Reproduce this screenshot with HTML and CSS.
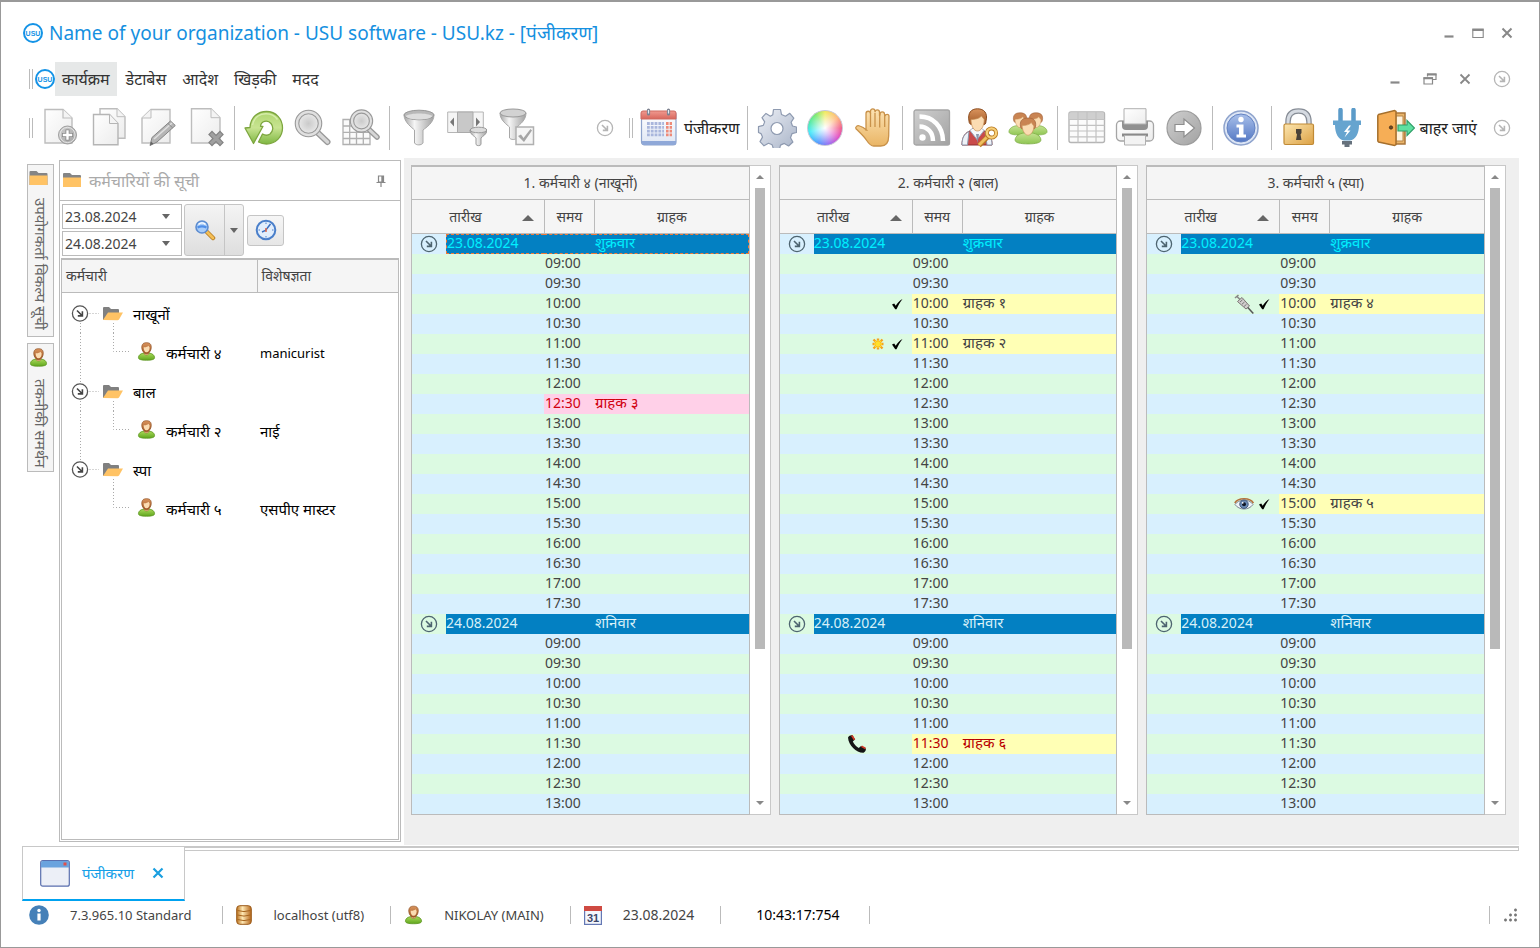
FILE: index.html
```html
<!DOCTYPE html>
<html lang="hi">
<head>
<meta charset="utf-8">
<title>USU software - पंजीकरण</title>
<link rel="stylesheet" href="styles.css">
</head>
<body>
<svg class="defs" aria-hidden="true">
  <defs>
    <linearGradient id="paper" x1="0" y1="0" x2="1" y2="1"><stop offset="0" stop-color="#fff"/><stop offset="1" stop-color="#ececec"/></linearGradient>
    <linearGradient id="steel" x1="0" y1="0" x2="1" y2="0"><stop offset="0" stop-color="#a5a5a5"/><stop offset=".35" stop-color="#f6f6f6"/><stop offset="1" stop-color="#a0a0a0"/></linearGradient>
    <linearGradient id="grey" x1="0" y1="0" x2="1" y2="1"><stop offset="0" stop-color="#cfcfcf"/><stop offset="1" stop-color="#a2a2a2"/></linearGradient>
    <radialGradient id="glass"><stop offset="0" stop-color="#cacaca"/><stop offset="1" stop-color="#ececec"/></radialGradient>
    <linearGradient id="green" x1="0" y1="0" x2="0" y2="1"><stop offset="0" stop-color="#aed66f"/><stop offset=".5" stop-color="#c8e491"/><stop offset="1" stop-color="#7fb743"/></linearGradient>
    <linearGradient id="gear" x1="0" y1="0" x2="1" y2="1"><stop offset="0" stop-color="#edf0f6"/><stop offset="1" stop-color="#a9b4c8"/></linearGradient>
    <linearGradient id="skin" x1="0" y1="0" x2="0" y2="1"><stop offset="0" stop-color="#fce3b4"/><stop offset="1" stop-color="#eab565"/></linearGradient>
    <linearGradient id="hair" x1="0" y1="0" x2="0" y2="1"><stop offset="0" stop-color="#d9935c"/><stop offset="1" stop-color="#a25b28"/></linearGradient>
    <linearGradient id="shirt" x1="0" y1="0" x2="0" y2="1"><stop offset="0" stop-color="#a9d95a"/><stop offset="1" stop-color="#5fa61c"/></linearGradient>
    <linearGradient id="softshirt" x1="0" y1="0" x2="0" y2="1"><stop offset="0" stop-color="#c4e290"/><stop offset="1" stop-color="#8fc653"/></linearGradient>
    <linearGradient id="blue" x1="0" y1="0" x2="0" y2="1"><stop offset="0" stop-color="#a9c0ea"/><stop offset="1" stop-color="#5478c4"/></linearGradient>
    <linearGradient id="gold" x1="0" y1="0" x2="1" y2="1"><stop offset="0" stop-color="#fce6b0"/><stop offset="1" stop-color="#dca144"/></linearGradient>
    <linearGradient id="barrel" x1="0" y1="0" x2="1" y2="0"><stop offset="0" stop-color="#b9701d"/><stop offset=".4" stop-color="#ffe9b5"/><stop offset="1" stop-color="#b5661b"/></linearGradient>
    <linearGradient id="redbar" x1="0" y1="0" x2="0" y2="1"><stop offset="0" stop-color="#f09a90"/><stop offset="1" stop-color="#d8665c"/></linearGradient>
    <linearGradient id="calpage" x1="0" y1="0" x2="0" y2="1"><stop offset="0" stop-color="#fff"/><stop offset="1" stop-color="#dfe6f4"/></linearGradient>
  </defs>
  <symbol id="i-more" viewBox="0 0 18 18">
    <circle cx="9" cy="9" r="7.6" fill="none" stroke="currentColor" stroke-width="1.3"/>
    <path d="M6 6l5 5M11.4 6.8v4.6H6.800" fill="none" stroke="currentColor" stroke-width="1.6"/>
  </symbol>
  <symbol id="i-person" viewBox="0 0 20 20">
    <path d="M1.500 16.500c0-3 3-4.500 5.500-4.800h6c2.500.3 5.500 1.800 5.500 4.800 0 2-3.500 2.700-8.500 2.700s-8.500-.7-8.500-2.700z" fill="url(#shirt)" stroke="#5c9422" stroke-width=".8"/>
    <path d="M7.500 10.500h5v2c-.8 1.600-4.200 1.600-5 0z" fill="#f0c08c" stroke="#8c5a2c" stroke-width=".5"/>
    <path d="M5 6c0-4 2-5.300 5-5.300S15.300 2 15 6c-.2 3-2 6.300-5 6.300S5.200 9 5 6z" fill="url(#hair)" stroke="#8a4a1c" stroke-width=".7"/>
    <path d="M7 5.500c2 .3 4-.3 5-1.500l1.300 1.800c0 3-1.300 5-3.300 5S7 8.500 7 5.500z" fill="#fbdcb2"/>
  </symbol>
  <symbol id="i-member" viewBox="0 0 20 20">
    <path d="M.8 16.500c0-3 3.500-4.800 6-5h6.400c2.500.2 6 2 6 5 0 2-4 2.700-9.200 2.700S.8 18.500.8 16.500z" fill="url(#softshirt)" stroke="#7fae48" stroke-width=".6"/>
    <path d="M4.500 5.500C4.500 2 6.500.7 10 .7s5.500 1.300 5.500 4.800c0 1.500-.5 2.500-1 3h-9c-.5-.5-1-1.500-1-3z" fill="#c98452" stroke="#a0623a" stroke-width=".5"/>
    <path d="M5.800 6c2.500.2 5.500-.5 6.500-2l1.900 2.500c0 3.500-2 6.500-4.200 6.500S5.800 9.500 5.800 6z" fill="#fbdcb2" stroke="#c58d55" stroke-width=".4"/>
  </symbol>
  <symbol id="i-folder" viewBox="0 0 18 15">
    <path d="M0 1q0-1 1-1h6l2 2h8q1 0 1 1v11H0z" fill="#858585"/>
    <path d="M0 4.500h18v9.500H0z" fill="#ffc365"/>
  </symbol>
  <symbol id="i-check" viewBox="0 0 12 12">
    <path d="M1 6.500l2.200-1 1.500 2.300C6.500 5 8.500 2.500 11.500 1 9 4 7 8 5.500 11.200H4.200z" fill="#000"/>
  </symbol>
  <symbol id="i-star" viewBox="0 0 18 14">
    <path d="M9 1.500v11M3.500 7h11M4.500 2.500l9 9M13.500 2.500l-9 9" stroke="#f5a21c" stroke-width="2.400"/>
    <path d="M9 3v8M5 7h8M6 4l6 6M12 4l-6 6" stroke="#ffe02a" stroke-width="1.300"/>
  </symbol>
  <symbol id="i-syringe" viewBox="0 0 20 20">
    <path d="M1 4l3.500-3M3 2.500l3 3" stroke="#888" stroke-width="1.600"/>
    <path d="M3.500 7.500L8 3.500l7.500 8.500-3.500 3z" fill="#d0cccc" stroke="#7c7474"/>
    <path d="M6 8l2.500-2.200M8 10.200l2.500-2.200M10 12.500l2.500-2.200" stroke="#777"/>
    <path d="M13.800 13.500l5.500 6" stroke="#555" stroke-width="1.500"/>
  </symbol>
  <symbol id="i-eye" viewBox="0 0 20 14">
    <path d="M1 7.500C4 2.500 15 1 19 7.500c-4 6-14 6-18 0z" fill="#eef4fa" stroke="#7e8794"/>
    <path d="M.8 6C4 .5 16 .2 19.400 6" fill="none" stroke="#b5703c" stroke-width="1.500"/>
    <circle cx="10" cy="7.200" r="4.200" fill="#6c8db8" stroke="#44597a"/>
    <circle cx="10" cy="7.200" r="2" fill="#101828"/><circle cx="8.700" cy="5.800" r=".9" fill="#fff"/>
  </symbol>
  <symbol id="i-phone" viewBox="0 0 20 20">
    <path d="M1 3.500C2 1.500 4 .8 5.500 1.300L8 5.500 5.800 7.500c1.400 3 3.300 5 6 6.400l2.200-2 4.800 2.600c.5 1.700-.8 3.400-2.300 4.200C9.500 19 1.500 11.500 1 3.500z" fill="#151515"/>
    <path d="M4.800 1.500l2.700 4.300M14.500 12.300l4 2.200" stroke="#d23a28" stroke-width="1.800"/>
  </symbol>
</svg>

<div class="window">
  <header class="titlebar">
    <svg class="logo" viewBox="0 0 20 20"><circle cx="10" cy="10" r="9" fill="#fff" stroke="#1493e6" stroke-width="2"/><text x="10" y="12.500" text-anchor="middle" class="logo-text">USU</text></svg>
    <h1>Name of your organization - USU software - USU.kz - [पंजीकरण]</h1>
    <div class="controls title-controls">
      <button type="button" aria-label="Minimize"><svg width="12" height="12"><path d="M1.500 9.500h9" stroke="#888" stroke-width="2.200"/></svg></button>
      <button type="button" aria-label="Maximize"><svg width="12" height="12"><path d="M.8 2h10.400v8.500H.8z" fill="none" stroke="#888" stroke-width="1.100"/><path d="M.5 3h11" stroke="#888" stroke-width="2"/></svg></button>
      <button type="button" aria-label="Close"><svg width="12" height="12"><path d="M1.500 1.500l9 9M10.500 1.500l-9 9" stroke="#888" stroke-width="2"/></svg></button>
    </div>
  </header>

  <nav class="menubar">
    <span class="grip"></span>
    <svg class="logo" viewBox="0 0 20 20"><circle cx="10" cy="10" r="9" fill="#fff" stroke="#1493e6" stroke-width="2"/><text x="10" y="12.500" text-anchor="middle" class="logo-text">USU</text></svg>
    <div class="menus">
      <button type="button" class="menu active">कार्यक्रम</button>
      <button type="button" class="menu">डेटाबेस</button>
      <button type="button" class="menu">आदेश</button>
      <button type="button" class="menu">खिड़की</button>
      <button type="button" class="menu">मदद</button>
    </div>
    <div class="controls child-controls">
      <button type="button" aria-label="Minimize child"><svg width="12" height="12"><path d="M1.500 9.500h9" stroke="#888" stroke-width="2.200"/></svg></button>
      <button type="button" aria-label="Restore child"><svg width="14" height="12"><path d="M4.500 3.500V1h8.500v5.500h-3M1 4.800h8.500v6.200H1z" fill="none" stroke="#888" stroke-width="1.200"/><path d="M4 1.500h9.500M.5 5.300h9.500" stroke="#888" stroke-width="2"/></svg></button>
      <button type="button" aria-label="Close child"><svg width="12" height="12"><path d="M1.500 1.500l9 9M10.500 1.500l-9 9" stroke="#888" stroke-width="1.800"/></svg></button>
      <button type="button" class="more" aria-label="More"><svg width="18" height="18"><use href="#i-more"/></svg></button>
    </div>
  </nav>

  <div class="toolbars">
    <div class="toolbar main-tools" role="toolbar">
      <span class="grip"></span>
      <button type="button" class="tool" aria-label="New"><svg viewBox="0 0 40 40"><path d="M4 1.500h18l9 8.500v25H4z" fill="url(#paper)" stroke="#bdbdbd" stroke-width="1.400"/><path d="M22 1.500v8.500h9" fill="#f4f4f4" stroke="#bdbdbd" stroke-width="1.200"/><circle cx="26.500" cy="27" r="9" fill="url(#grey)" stroke="#a0a0a0"/><circle cx="26.500" cy="27" r="7.600" fill="none" stroke="#e6e6e6"/><path d="M26.500 21.500v11M21 27h11" stroke="#888" stroke-width="4"/><path d="M26.500 22.300v9.400M21.800 27h9.400" stroke="#fff" stroke-width="2.400"/></svg></button>
      <button type="button" class="tool" aria-label="Copy"><svg viewBox="0 0 40 40"><path d="M11 .7h17l8 8v21.500H11z" fill="url(#paper)" stroke="#bdbdbd" stroke-width="1.400"/><path d="M28 .7v8h8" fill="#f4f4f4" stroke="#bdbdbd"/><path d="M4.500 6.500h16l8.500 9v21.300H4.500z" fill="url(#paper)" stroke="#b5b5b5" stroke-width="1.400"/><path d="M20.500 6.500v9H29" fill="#f4f4f4" stroke="#b5b5b5"/></svg></button>
      <button type="button" class="tool" aria-label="Edit"><svg viewBox="0 0 40 40"><path d="M14 1.500h19v33.500H5V10z" fill="url(#paper)" stroke="#bdbdbd" stroke-width="1.400"/><path d="M14 1.500V10H5" fill="#f4f4f4" stroke="#bdbdbd"/><path d="M13 37.500l2-8L33.500 13l4.800 4.500L20 34z" fill="#b5b5b5" stroke="#858585"/><path d="M17 31l18-16" stroke="#dedede" stroke-width="1.600"/><path d="M13 37.500l1-4 2.500 2.300z" fill="#666"/><path d="M31 15.500l4.800 4.500" stroke="#8a8a8a"/></svg></button>
      <button type="button" class="tool" aria-label="Delete"><svg viewBox="0 0 40 40"><path d="M6.500 .7h19.500l9 9v25.300H6.500z" fill="url(#paper)" stroke="#bdbdbd" stroke-width="1.400"/><path d="M26 .7v9h9" fill="#f4f4f4" stroke="#bdbdbd"/><path d="M27 26.500l8 8M35 26.500l-8 8" stroke="#838383" stroke-width="5.500" stroke-linecap="square"/><path d="M27 26.500l8 8M35 26.500l-8 8" stroke="#a0a0a0" stroke-width="3.200" stroke-linecap="square"/></svg></button>
      <span class="sep"></span>
      <button type="button" class="tool" aria-label="Refresh"><svg viewBox="0 0 40 40"><path d="M6 19.500C6.500 9 14 3.500 22.500 3.500c9.500 0 16 7.500 16 16.500s-7 16-16 16c-3 0-5.500-.6-8-2l4-8c3 1.800 5.500 1.500 7.500 0 3.500-2.800 3.500-7.500 1-10.500-3.500-4-10-2.500-10.500 2.800h2.500L9.500 35.500 1 20z" fill="url(#green)" stroke="#7da63f" stroke-width="1.300" stroke-linejoin="round"/><path d="M8.500 17C10 9.500 15.500 5.800 22 5.800c5 0 9 2.200 11.500 5.700" fill="none" stroke="#d6edab" stroke-width="1.500"/></svg></button>
      <button type="button" class="tool" aria-label="Search"><svg viewBox="0 0 40 40"><path d="M25 24l10.500 10" stroke="#999" stroke-width="6" stroke-linecap="round"/><path d="M25 24l10.500 10" stroke="#d6d6d6" stroke-width="3.400" stroke-linecap="round"/><circle cx="16.500" cy="15.500" r="11.500" fill="url(#glass)" stroke="#999" stroke-width="4.600"/><circle cx="16.500" cy="15.500" r="11.500" fill="none" stroke="#e0e0e0" stroke-width="2.400"/></svg></button>
      <button type="button" class="tool" aria-label="Search in table"><svg viewBox="0 0 40 40"><path d="M3 11.500h27v25H3zM3 18h27M3 24.300h27M3 30.500h27M9.700 11.500v25M16.500 11.500v25M23.300 11.500v25" fill="#fafafa" stroke="#b0b0b0" stroke-width="1.300"/><path d="M29 21.500l8 7.500" stroke="#999" stroke-width="5.500" stroke-linecap="round"/><path d="M29 21.500l8 7.500" stroke="#d6d6d6" stroke-width="2.900" stroke-linecap="round"/><circle cx="21.500" cy="13" r="9.500" fill="url(#glass)" stroke="#999" stroke-width="4.400"/><circle cx="21.500" cy="13" r="9.500" fill="none" stroke="#e0e0e0" stroke-width="2.200"/></svg></button>
      <span class="sep"></span>
      <button type="button" class="tool" aria-label="Filter"><svg viewBox="0 0 40 40"><path d="M5 6.500c0 8 8 13 10.500 15.500v13c1.500 2.500 7 2.500 8.500 0V22C27 19.500 35 15 35 6.500z" fill="url(#steel)" stroke="#a8a8a8"/><ellipse cx="20" cy="7" rx="15" ry="4.800" fill="#b8b8b8" stroke="#999"/><path d="M6.500 8c5-3.500 22-3.500 27 0-3 4.800-24 4.800-27 0z" fill="#dedede"/></svg></button>
      <button type="button" class="tool" aria-label="Filter columns"><svg viewBox="0 0 40 40"><path d="M.7 4h35.600v20.500H.7z" fill="#f5f5f5" stroke="#b5b5b5"/><path d="M10.500 4h15.500v20.500H10.500z" fill="#c8c8c8" stroke="#aaa"/><path d="M7 9.500v9l-4-4.500zM29 9.500v9l4-4.500z" fill="#777"/><path d="M23 22c0 4.500 4.500 6 6 8v6.500c1 1.500 4 1.500 5 0V30c1.500-2 6-3.500 6-8z" fill="url(#steel)" stroke="#999"/><ellipse cx="31.500" cy="22" rx="8.300" ry="2.800" fill="#dcdcdc" stroke="#999"/></svg></button>
      <button type="button" class="tool" aria-label="Apply filter"><svg viewBox="0 0 40 40"><path d="M5 5c0 7.500 7 11.500 9.500 14v11c1.500 2 6 2 7.500 0V19C24.500 16.500 31 12.500 31 5z" fill="url(#steel)" stroke="#a8a8a8"/><ellipse cx="18" cy="5" rx="13" ry="4" fill="#d2d2d2" stroke="#999"/><path d="M21 19h17.500v17.500H21z" fill="#f5f5f5" stroke="#b0b0b0" stroke-width="1.500"/><path d="M23 28l3-1.500 2.500 3.500 7-9 1.500 1.500-8 11.500z" fill="#a5a5a5"/></svg></button>
      <button type="button" class="more push" aria-label="More"><svg width="18" height="18"><use href="#i-more"/></svg></button>
    </div>
    <div class="toolbar extra-tools" role="toolbar">
      <span class="grip"></span>
      <button type="button" class="tool wide"><svg viewBox="0 0 40 40"><rect x="2.500" y="3.500" width="34.500" height="33.500" rx="3" fill="url(#calpage)" stroke="#8ea3cc" stroke-width="1.200"/><path d="M3 33h34v2q0 2-2 2H5q-2 0-2-2z" fill="#8fa8d8"/><path d="M2 11V5q0-2 2-2h31q2 0 2 2v6z" fill="url(#redbar)" stroke="#cf6a60"/><path d="M8 15.500h17M8 19.300h17M8 23.100h17M8 26.900h17" stroke="#a9b6dc" stroke-width="2.800" stroke-dasharray="2.800 1"/><path d="M27 15.500h6M27 19.300h6M27 23.100h6M27 26.900h6" stroke="#ee8a78" stroke-width="2.800" stroke-dasharray="2.600 1"/><path d="M9.500 2v4M29.500 2v4" stroke="#7c8290" stroke-width="3.200" stroke-linecap="round"/><path d="M9.500 2v3.500M29.500 2v3.500" stroke="#e8ecf2" stroke-width="1.200"/></svg><span>पंजीकरण</span></button>
      <span class="sep"></span>
      <button type="button" class="tool" aria-label="Settings"><svg viewBox="0 0 40 40"><path d="M16.500 1.500h7l1 5 4 1.700 4.300-2.900 4 4.800-2.700 4.200 1.400 3.700 4 1v5.500l-4.500 1.200-1.500 4 2.400 4.300-4.300 4-4.300-2.600-3.800 1.700-1 3.900h-6l-1.400-4.200-3.600-1.500-4.500 2.500-4-4.200 2.500-4.500-1.500-3.500L1.500 24.500v-5.800l4.800-1.300 1.400-3.500-2.700-4.300 4-4.200 4.400 2.800 2.400-1.500z" fill="url(#gear)" stroke="#8e9ab0" stroke-width="1.200" stroke-linejoin="round"/><circle cx="20" cy="20.500" r="6" fill="#fff" stroke="#8e9ab0" stroke-width="1.200"/></svg></button>
      <button type="button" class="tool" aria-label="Colours"><span class="wheel"></span></button>
      <button type="button" class="tool" aria-label="Hand"><svg viewBox="0 0 40 40"><path d="M13 22V5.500c0-3 4.500-3 4.500 0V3.200c0-3 4.500-3 4.500 0v1c0-3 4.500-3 4.500 0v3.500l.5-1.500c0-3 4.500-3 4.500 0l.5 2c.5-2.500 4-2.500 4 0l-.3 19.500c0 7-3 10.300-8 10.300h-7c-3 0-5-2.500-7-5.500-3-4.500-7-8-10.500-11.500-1.500-2 1-4 3.500-3 2.500.8 4.500 2 6.800 4z" fill="url(#skin)" stroke="#c9924a" stroke-width="1.300"/><path d="M17.500 5v14M22 5v14M26.700 6v13.500M31.700 7v12" stroke="#c9924a" stroke-width="1.300"/></svg></button>
      <span class="sep"></span>
      <button type="button" class="tool" aria-label="Feed"><svg viewBox="0 0 40 40"><rect x="2" y="2" width="35.500" height="35" rx="2" fill="url(#grey)" stroke="#a5a5a5" stroke-width="1.300"/><circle cx="10.500" cy="29.500" r="3.200" fill="#fff"/><path d="M7.500 18.500c8 0 13.500 6 13.500 14.500M7.500 8.500C21 8.500 31 18.500 31 33" fill="none" stroke="#fff" stroke-width="4.500"/></svg></button>
      <button type="button" class="tool" aria-label="User rights"><svg viewBox="0 0 40 40"><path d="M2 37c0-8 3-12.500 9-14.500h12c6 2 9 6 9 14.500z" fill="#c94a4a" stroke="#8c2f30"/><path d="M2 37c0-7 2-11 7-13.500L7.500 37zM32 37c0-7-2-11-7-13.500L27 37z" fill="#eef2f8" stroke="#8b97ab"/><path d="M10 22.500l7 9 7-9-2-2H12z" fill="#f6f8fb" stroke="#9aa6ba"/><path d="M16 26h3l-1.500 9z" fill="#8b97ab"/><path d="M9 13C7.500 5 11 .8 17.500.8S28 5 26 13c0 3-1.500 4-2.500 3.500h-12c-1 0-2.500-1-2.500-3.500z" fill="url(#hair)" stroke="#8a4a1c"/><path d="M11 11.500c4 0 8.500-1 10.500-3.500l2.700 3.500c0 7-3.200 11.500-6.700 11.500S11 18.500 11 11.500z" fill="#fbdcb2" stroke="#c58d55" stroke-width=".7"/><path d="M19 37.500l9.500-9.500" stroke="#b87a22" stroke-width="5"/><path d="M19 37l9.500-9.500" stroke="#f0c060" stroke-width="3"/><circle cx="31.500" cy="25" r="4.600" fill="none" stroke="#b87a22" stroke-width="4"/><circle cx="31.500" cy="25" r="4.600" fill="none" stroke="#f7cf78" stroke-width="2.400"/></svg></button>
      <button type="button" class="tool" aria-label="Users"><svg viewBox="0 0 40 40"><svg x="0" y="4" width="24" height="24"><use href="#i-member"/></svg><svg x="16" y="4" width="24" height="24"><use href="#i-member"/></svg><svg x="6" y="9" width="28" height="28"><use href="#i-member"/></svg></svg></button>
      <span class="sep"></span>
      <button type="button" class="tool" aria-label="Table"><svg viewBox="0 0 40 40"><rect x="2" y="4" width="35.500" height="30.500" rx="2" fill="#fbfbfb" stroke="#b5b5b5" stroke-width="1.400"/><path d="M2.500 4.500h34.500v7H2.500z" fill="#cfcfcf"/><path d="M2 11.500h35.500M2 17.300h35.500M2 23h35.500M2 28.800h35.500M11 4v30.500M20 4v30.500M29 4v30.500" stroke="#c2c2c2" stroke-width="1.200"/></svg></button>
      <button type="button" class="tool" aria-label="Print"><svg viewBox="0 0 40 40"><rect x="1.500" y="13" width="37" height="20" rx="4" fill="url(#paper)" stroke="#a5a5a5" stroke-width="1.300"/><path d="M7 13h26v5q0 4-4 4H11q-4 0-4-4z" fill="#909090"/><path d="M9 .7h22V16H9z" fill="url(#paper)" stroke="#b0b0b0"/><path d="M7 25.500h26v3H7z" fill="#8a8a8a"/><path d="M9.500 27.500h21V37h-21z" fill="#f3f3f3" stroke="#b0b0b0"/></svg></button>
      <button type="button" class="tool" aria-label="Next"><svg viewBox="0 0 40 40"><circle cx="21" cy="20" r="17" fill="url(#grey)" stroke="#9c9c9c" stroke-width="1.200"/><path d="M12 16.500h9v-5.500l10.500 9-10.500 9v-5.500h-9z" fill="#fff" stroke="#8e8e8e" stroke-width="1.200"/></svg></button>
      <span class="sep"></span>
      <button type="button" class="tool" aria-label="Info"><svg viewBox="0 0 40 40"><circle cx="19" cy="20" r="17" fill="#dce5f5" stroke="#8da2cc" stroke-width="1.500"/><circle cx="19" cy="20" r="14" fill="url(#blue)" stroke="#6483c2"/><circle cx="19" cy="11.500" r="2.700" fill="#fff"/><path d="M14.500 16.500h7v10h2.500v3h-9.500v-3H17v-7h-2.500z" fill="#fff"/></svg></button>
      <span class="sep"></span>
      <button type="button" class="tool" aria-label="Lock"><svg viewBox="0 0 40 40"><path d="M7 19v-5C7 5.500 11.500 3 17.500 3S28 5.500 28 14v5" fill="none" stroke="#878d96" stroke-width="5.500"/><path d="M7 19v-5C7 5.500 11.500 3 17.500 3S28 5.500 28 14v5" fill="none" stroke="#d5dae1" stroke-width="3"/><rect x="3" y="16" width="29.500" height="20.500" rx="1.500" fill="url(#gold)" stroke="#c08a35" stroke-width="1.200"/><path d="M15 21h5.500v4l-1 1.500 1 5.500H15l1-5.500-1-1.500z" fill="#4a4238"/></svg></button>
      <button type="button" class="tool" aria-label="Connection"><svg viewBox="0 0 40 40"><path d="M11.500 2v12M24.500 2v12" stroke="#5b9bc9" stroke-width="4.500" stroke-linecap="round"/><path d="M4 12.500h28v4.500h-2c0 9-3.500 14.500-9 15.500h-6c-5.500-1-9-6.500-9-15.500H4z" fill="#66a4cf"/><path d="M13 33h10v3.500h-2.500v2.500h-5v-2.500H13z" fill="#66717c"/><path d="M20 17.500l-5 6.500h3l-2.500 5.500 6-7h-3l3.500-5z" fill="#fff"/></svg></button>
      <button type="button" class="tool wide"><svg viewBox="0 0 40 40"><path d="M17 5h13v31H17z" fill="#e9b56b" stroke="#a9753b" stroke-width="1.500"/><path d="M21 8h7v25h-7z" fill="#fff3dc" stroke="#b98649"/><path d="M3.500 6.500L19.500 2.500l1.500 1v33l-1.500 1-16-3.500q-.7-.5-.7-1.500V8q0-1 .7-1.500z" fill="#f6ae56" stroke="#a56f2c" stroke-width="1.500"/><circle cx="16" cy="19.500" r="1.600" fill="#6b4a28" stroke="#4c3218"/><path d="M23 17h9v-4.500l7.500 7.500-7.500 7.500V23h-9z" fill="#5fe0a0" stroke="#2f9e68" stroke-width="1.200"/></svg><span>बाहर जाएं</span></button>
      <button type="button" class="more push" aria-label="More"><svg width="18" height="18"><use href="#i-more"/></svg></button>
    </div>
  </div>

  <main class="workspace">
    <aside class="sidetabs">
      <button type="button" class="sidetab"><svg width="19" height="15"><use href="#i-folder"/></svg><span>उपयोगकर्ता विकल्प सूची</span></button>
      <button type="button" class="sidetab"><svg width="19" height="19"><use href="#i-person"/></svg><span>तकनीकी समर्थन</span></button>
    </aside>

    <section class="panel">
      <header class="panel-head">
        <svg width="18" height="15"><use href="#i-folder"/></svg>
        <h2>कर्मचारियों की सूची</h2>
        <button type="button" class="pin" aria-label="Pin"><svg width="10" height="12"><path d="M2.500 1h5v6h-5zM.5 7.500h9M5 7.500V12" fill="none" stroke="#888" stroke-width="1.200"/><path d="M6.300 1v6" stroke="#888" stroke-width="2"/></svg></button>
      </header>
      <div class="filters">
        <div class="dates">
          <div class="datebox"><input type="text" value="23.08.2024" aria-label="Date from"><button type="button" aria-label="Open"><span class="arrow-down"></span></button></div>
          <div class="datebox"><input type="text" value="24.08.2024" aria-label="Date to"><button type="button" aria-label="Open"><span class="arrow-down"></span></button></div>
        </div>
        <div class="split">
          <button type="button" class="split-main" aria-label="Find"><svg width="22" height="22"><path d="M13 13l6 6" stroke="#b8802a" stroke-width="4.500" stroke-linecap="round"/><path d="M13 13l6 6" stroke="#f5bf55" stroke-width="2.600" stroke-linecap="round"/><circle cx="8" cy="8" r="6" fill="#a9cdf8" stroke="#5c8cd0" stroke-width="1.600"/><path d="M3.500 8.500c3-1.500 6-1.500 9 0" stroke="#4f8ee8" stroke-width="2" fill="none"/><path d="M4.500 5.500c2-2 5-2 7 0" stroke="#fff" stroke-width="1.500" fill="none"/></svg></button>
          <button type="button" class="split-arrow" aria-label="Options"><span class="arrow-down"></span></button>
        </div>
        <button type="button" class="clock" aria-label="Now"><svg width="22" height="22"><circle cx="11" cy="11" r="9.300" fill="#e2eefc" stroke="#4a7fca" stroke-width="2"/><path d="M11 3.500v1.500M11 17v1.500M3.500 11H5M17 11h1.500" stroke="#4a7fca"/><path d="M15.500 5l-5 6.500L7 13" fill="none" stroke="#3b6fc0" stroke-width="1.500"/><path d="M11 9v4" stroke="#e0684a" stroke-width="1.500"/></svg></button>
      </div>
      <div class="tree-box">
        <table class="tree">
          <colgroup><col class="col-staff"><col></colgroup>
          <thead><tr><th>कर्मचारी</th><th>विशेषज्ञता</th></tr></thead>
          <tbody id="tree-rows"></tbody>
        </table>
      </div>
    </section>

    <div class="boards" id="boards"></div>
  </main>

  <div class="doc-tabs">
    <div class="doc-tab">
      <svg width="30" height="27"><rect x=".7" y=".7" width="28.600" height="25.500" rx="2" fill="#eceff7" stroke="#5a6fae" stroke-width="1.200"/><path d="M1 7.500V3q0-2 2-2h24q2 0 2 2v4.500z" fill="#6aa3de"/><rect x="23.500" y="2.500" width="3" height="3" fill="#e2504a"/></svg>
      <a href="#boards">पंजीकरण</a>
      <button type="button" aria-label="Close tab"><svg width="12" height="12"><path d="M1.500 1.500l9 9M10.500 1.500l-9 9" stroke="#1a9fe0" stroke-width="2.200"/></svg></button>
    </div>
  </div>

  <footer class="status">
    <svg width="20" height="20"><circle cx="10" cy="10" r="9.800" fill="#4580b8"/><circle cx="10" cy="5.500" r="1.700" fill="#fff"/><path d="M8.400 8.500h3.200v7H8.400z" fill="#fff"/></svg>
    <span class="cell small c-version">7.3.965.10 Standard</span>
    <svg width="16" height="20"><rect x=".7" y=".7" width="14.600" height="18.600" rx="3" fill="url(#barrel)" stroke="#9a5a1a"/><path d="M1.500 5.500q6.500 2.200 13 0M1.500 10q6.500 2.200 13 0M1.500 14.500q6.500 2.200 13 0" fill="none" stroke="#a8661f"/></svg>
    <span class="cell small">localhost (utf8)</span>
    <svg width="19" height="20"><use href="#i-person"/></svg>
    <span class="cell small">NIKOLAY (MAIN)</span>
    <svg width="18" height="19"><rect x=".6" y=".6" width="16.800" height="17.800" fill="#f4f7fc" stroke="#6478b4" stroke-width="1.200"/><path d="M0 0h18v5H0z" fill="#cf4a42"/><text x="9" y="15.500" text-anchor="middle" class="cal-text">31</text></svg>
    <span class="cell">23.08.2024</span>
    <span class="cell c-clock">10:43:17:754</span>
    <span class="cell c-end"></span>
    <svg width="14" height="14" class="dots"><path d="M11 2h3M6 7h3M11 7h3M1 12h3M6 12h3M11 12h3" stroke="#777" stroke-width="1.500"/><path d="M12.500 .5v3M7.500 5.500v3M12.500 5.500v3M2.500 10.500v3M7.500 10.500v3M12.500 10.500v3" stroke="#777" stroke-width="1.500"/></svg>
  </footer>
</div>
<script src="schedule.js"></script>
</body>
</html>
```
FILE: styles.css
```css
*, *::before, *::after { box-sizing: border-box; }

body {
  margin: 0;
  background: #fff;
  color: #444;
  font: 14px/20px "Noto Sans", "Open Sans", sans-serif;
}

button, input {
  margin: 0;
  padding: 0;
  border: 0;
  background: none;
  color: inherit;
  font: inherit;
}

h1, h2 { margin: 0; font-weight: 400; }
svg { display: block; flex: none; }
.defs { position: absolute; width: 0; height: 0; }

.window {
  display: flex;
  flex-direction: column;
  min-height: 100vh;
  border: 1px solid #999;
  border-top-width: 2px;
  padding-bottom: 19px;
}

.logo { width: 20px; height: 20px; }
.logo-text { font: 700 7px "Liberation Sans", sans-serif; fill: #1493e6; }

/* title bar */
.titlebar {
  display: flex;
  align-items: center;
  gap: 6px;
  height: 60px;
  padding: 2px 26px 0 22px;
}
.titlebar h1 { font-size: 19px; line-height: 28px; color: #1590e0; white-space: nowrap; }
.controls { display: flex; align-items: center; margin-left: auto; }
.title-controls { gap: 17px; }

/* menu */
.menubar {
  display: flex;
  align-items: stretch;
  height: 36px;
  padding: 0 28px 2px 28px;
}
.menubar .logo { align-self: center; margin: 0 0 0 2px; }
.grip {
  flex: none;
  align-self: center;
  width: 4px;
  height: 20px;
  border: solid #bbb;
  border-width: 0 1px;
}
.menus { display: flex; gap: 2px; }
.menu { padding: 0 7px; color: #333; font-size: 16px; white-space: nowrap; }
.menu.active { background: #e6e8e8; }
.child-controls { gap: 22px; }
.more { color: #b5b5b5; }

/* toolbars */
.toolbars { display: flex; height: 60px; padding: 0 28px 0 28px; }
.toolbar { display: flex; align-items: center; }
.main-tools { flex: 0 1 585px; }
.extra-tools { flex: 1; padding-left: 15px; }
.toolbar .grip { margin-right: 4px; }
.tool { flex: none; display: grid; place-items: center; width: 48px; height: 48px; }
.tool > svg { width: 40px; height: 40px; }
.wide { display: flex; align-items: center; gap: 5px; width: auto; padding: 0 2px; color: #222; white-space: nowrap; font-size: 16px; }
.sep { flex: none; width: 1px; height: 44px; margin: 0 5px; background: #bbb; }
.push { margin-left: auto; }
.wheel {
  width: 36px;
  height: 36px;
  border: 1px solid #c8c8d8;
  border-radius: 50%;
  background:
    radial-gradient(circle, #fff 0, #ffffffa0 30%, #fff0 75%),
    conic-gradient(#f0e850, #ffb070 50deg, #f05080 90deg, #e040c0 125deg, #9060f0 165deg, #4090ff 205deg, #30e8f8 255deg, #40e8a0 290deg, #70e860 325deg, #f0e850);
}

/* workspace */
.workspace { display: flex; flex: 1; padding: 0 20px 0 26px; }
.sidetabs { display: flex; flex-direction: column; gap: 6px; padding-top: 6px; }
.sidetab {
  display: flex;
  flex-direction: column;
  align-items: center;
  gap: 12px;
  width: 27px;
  padding: 4px 0;
  border: 1px solid #bbb;
  background: #f5f5f5;
  color: #666;
}
.sidetab svg { margin-right: 4px; }
.sidetab span { writing-mode: vertical-rl; white-space: nowrap; font-size: 15px; }
.sidetab:first-child { padding: 6px 0; }

.panel {
  flex: none;
  display: flex;
  flex-direction: column;
  width: 342px;
  margin: 2px 3px 3px 5px;
  border: 1px solid #bbb;
  padding: 0 1px 1px;
}
.panel-head {
  display: flex;
  align-items: center;
  gap: 8px;
  height: 40px;
  padding: 0 14px 0 3px;
  margin: 0 -1px;
  border-bottom: 1px solid #bbb;
}
.panel-head h2 { color: #aaa; font-size: 16px; line-height: 24px; }
.pin { margin-left: auto; }
.filters { display: flex; align-items: center; gap: 2px; padding: 3px 1px 2px; }
.dates { display: grid; gap: 2px; }
.datebox { display: flex; width: 120px; height: 25px; border: 1px solid #bbb; }
.datebox input { flex: 1; min-width: 0; padding: 0 2px; }
.datebox button { display: grid; place-items: center; width: 30px; }
.arrow-down { width: 0; height: 0; border: 4px solid transparent; border-top: 5px solid #666; border-bottom: 0; }
.split { display: flex; height: 52px; border: 1px solid #c5c5c5; border-radius: 3px; background: linear-gradient(#f4f4f4, #dedede); }
.split button { display: grid; place-items: center; }
.split-main { width: 39px; }
.split-arrow { width: 19px; border-left: 1px solid #c5c5c5; }
.clock { display: grid; place-items: center; width: 37px; height: 31px; margin-left: 1px; border: 1px solid #c5c5c5; border-radius: 3px; background: linear-gradient(#f6f6f6, #e6e6e6); }

.tree-box { flex: 1; border: 1px solid #bbb; border-top-width: 2px; }
.tree { width: 100%; border-collapse: collapse; table-layout: fixed; color: #000; font-size: 15px; }
.col-staff { width: 195px; }
.tree th { height: 32px; padding: 0 4px; border-bottom: 1px solid #bbb; background: #f5f5f5; color: #444; font-size: 14px; font-weight: 400; text-align: left; }
.tree th + th { border-left: 1px solid #bbb; }
.tree td { height: 39px; padding: 0 3px; }
.tree tbody::before { content: ""; display: table-row; height: 2px; }
.node { display: flex; align-items: center; gap: 8px; height: 39px; white-space: nowrap; }
.node svg { margin-left: 3px; color: #555; }
.small { font-size: 13px; }

/* schedule boards */
.boards {
  flex: 1;
  display: grid;
  grid-template-columns: repeat(3, minmax(0, 1fr));
  align-items: start;
  gap: 8px;
  padding: 7px 13px 30px 7px;
  background: #efefef;
}
.board { display: flex; background: #fff; border-right: 1px solid #c8c8c8; }
.board-main { flex: 1; min-width: 0; border: 1px solid #bbb; border-top-width: 2px; }
.grid { width: 100%; border-collapse: separate; border-spacing: 0; table-layout: fixed; }
.col-toggle { width: 34px; }
.col-date { width: 98px; }
.col-time { width: 50px; }
.grid th { height: 33px; padding: 0; border-bottom: 1px solid #bbb; background: #f5f5f5; font-weight: 400; }
.grid tr + tr th { height: 34px; border-left: 1px solid #bbb; }
.grid tr + tr th:first-child { border-left: 0; }
.grid th.sorted { position: relative; padding-right: 25px; }
.sorted::after { content: ""; position: absolute; right: 10px; bottom: 12px; border: 6px solid transparent; border-bottom-color: #666; border-top: 0; }
.grid td { height: 20px; padding: 0; line-height: 18px; vertical-align: top; white-space: nowrap; }
.grid td:nth-last-child(2) { padding-left: 1px; }
.grid td:last-child { padding-left: 1px; font-size: 15px; line-height: 16px; }
.grid tbody tr:nth-child(odd) td { background: #d8f0fe; }
.grid tbody tr:nth-child(even) td { background: #dcfae2; }
.grid .icons { display: flex; justify-content: flex-end; align-items: center; gap: 4px; height: 20px; padding-right: 9px; }
.grid .gap { width: 32px; }
.grid .toggle { display: grid; place-items: center; height: 20px; color: #4d6470; }
.grid tbody tr.day .fill { background: #0380c2; color: #d8f0f8; }
.grid tbody tr.today .fill { color: #00f0ff; }
.grid tbody tr.focus .fill { border: dashed #f07838; border-width: 1px 0; line-height: 16px; }
.grid tbody tr.focus .fill:nth-child(2) { border-left-width: 1px; }
.grid tbody tr.focus .fill:last-child { border-right-width: 1px; line-height: 14px; }
.grid tbody tr.booked .slot { background: #ffffb5; }
.grid tbody tr.late .slot { color: #b80000; }
.grid tbody tr.missed .slot { background: #ffd0e8; color: #d00010; }

.scroll { flex: none; display: flex; flex-direction: column; align-items: center; width: 20px; border: solid #c8c8c8; border-width: 1px 0; }
.scroll button { display: grid; place-items: center; width: 18px; height: 22px; }
.scroll .up { border: 4px solid transparent; border-bottom-color: #888; border-top: 0; }
.scroll .down { border: 4px solid transparent; border-top-color: #888; border-bottom: 0; }
.track { flex: 1; display: flex; flex-direction: column; width: 10px; }
.thumb { flex: 461; background: #b9b9b9; }
.rest { flex: 143; }

/* document tabs */
.doc-tabs { display: flow-root; height: 57px; padding: 0 20px 0 21px; }
.doc-tabs::before { content: ""; display: block; height: 5px; border: 1px solid #c8c8c8; border-top-width: 2px; margin: 1px 0 -4px; }
.doc-tab {
  position: relative;
  display: flex;
  align-items: center;
  width: 163px;
  height: 54px;
  padding-left: 17px;
  border: solid #c8c8c8;
  border-width: 0 1px;
  border-bottom: 2px solid #00a2f0;
  background: #fff;
}
.doc-tab a { margin: 0 18px 0 12px; color: #159fe8; text-decoration: none; font-size: 15px; }

/* status bar */
.status { display: flex; align-items: center; min-height: 26px; padding: 0 22px 0 28px; white-space: nowrap; }
.cell { height: 18px; line-height: 18px; border-right: 1px solid #bbb; }
.status svg + .cell { padding: 0 26px 0 21px; }
.status .cell + svg { margin-left: 13px; }
.status svg + .c-version { padding: 0 31px 0 21px; }
.c-clock { padding: 0 29px 0 35px; color: #000; }
.c-end { flex: 1; }
.cal-text { font: 700 11px "Liberation Sans", sans-serif; fill: #3c4668; }
```
FILE: schedule.js
```js
const icon = (name, w, h) => `<svg width="${w}" height="${h}"><use href="#i-${name}"/></svg>`;
const check = icon('check', 12, 12);

const boards = [
  { title: '1. कर्मचारी ४ (नाखूनों)', focus: true, slots: {
    '0 12:30': { name: 'ग्राहक ३', cls: 'missed', icons: '' } } },
  { title: '2. कर्मचारी २ (बाल)', slots: {
    '0 10:00': { name: 'ग्राहक १', cls: 'booked', icons: check },
    '0 11:00': { name: 'ग्राहक २', cls: 'booked', icons: icon('star', 18, 14) + check },
    '1 11:30': { name: 'ग्राहक ६', cls: 'booked late', icons: icon('phone', 20, 20) + '<span class="gap"></span>' } } },
  { title: '3. कर्मचारी ५ (स्पा)', slots: {
    '0 10:00': { name: 'ग्राहक ४', cls: 'booked', icons: icon('syringe', 20, 20) + check },
    '0 15:00': { name: 'ग्राहक ५', cls: 'booked', icons: icon('eye', 20, 14) + check } } }
];

const days = [
  { date: '23.08.2024', name: 'शुक्रवार', from: 18, to: 35, cls: 'today' },
  { date: '24.08.2024', name: 'शनिवार', from: 18, to: 26, cls: '' }
];

const timeOf = half => String(Math.floor(half / 2)).padStart(2, '0') + (half % 2 ? ':30' : ':00');

function bodyRows(board) {
  let html = '';
  days.forEach((day, d) => {
    const focus = board.focus && d === 0 ? 'focus' : '';
    html += `<tr class="day ${day.cls} ${focus}"><td><span class="toggle">${icon('more', 18, 18)}</span></td>` +
      `<td class="fill">${day.date}</td><td class="fill"></td><td class="fill">${day.name}</td></tr>`;
    for (let half = day.from; half <= day.to; half++) {
      const time = timeOf(half);
      const s = board.slots[`${d} ${time}`] || { name: '', cls: '', icons: '' };
      html += `<tr class="${s.cls}"><td colspan="2">${s.icons ? `<div class="icons">${s.icons}</div>` : ''}</td>` +
        `<td class="slot">${time}</td><td class="slot">${s.name}</td></tr>`;
    }
  });
  return html;
}

document.getElementById('boards').innerHTML = boards.map(board => `
  <section class="board">
    <div class="board-main"><table class="grid">
      <colgroup><col class="col-toggle"><col class="col-date"><col class="col-time"><col></colgroup>
      <thead><tr><th colspan="4">${board.title}</th></tr>
      <tr><th colspan="2" class="sorted">तारीख</th><th>समय</th><th>ग्राहक</th></tr></thead>
      <tbody>${bodyRows(board)}</tbody>
    </table></div>
    <div class="scroll">
      <button type="button" aria-label="Scroll up"><span class="up"></span></button>
      <div class="track"><div class="thumb"></div><div class="rest"></div></div>
      <button type="button" aria-label="Scroll down"><span class="down"></span></button>
    </div>
  </section>`).join('');

const staff = [
  ['नाखूनों', 'कर्मचारी ४', '<span class="small">manicurist</span>'],
  ['बाल', 'कर्मचारी २', 'नाई'],
  ['स्पा', 'कर्मचारी ५', 'एसपीए मास्टर']
];

document.getElementById('tree-rows').innerHTML = staff.map(([group, person, role], i) => {
  const last = i === staff.length - 1;
  const dots = 'fill="none" stroke="#aaa" stroke-dasharray="1 2"';
  return `
  <tr><td colspan="2"><div class="node"><svg width="57" height="39">
    <path d="M21.500 19.500H31${i ? 'M12.500 0V11' : ''}${last ? '' : 'M12.500 29V39'}M45.500 29V39" ${dots}/>
    <circle cx="12" cy="19.500" r="7.600" fill="none" stroke="#555" stroke-width="1.300"/>
    <path d="M9 16.500l5 5M14.400 17.300v4.600H9.800" fill="none" stroke="#444" stroke-width="1.600"/>
    <path d="M35 26V14q0-1 1-1h5l2 2h7q1 0 1 1v4" fill="#808080"/>
    <path d="M35 26l5-7.500h15l-4 7q-.5.800-1.500.800z" fill="#ffc365"/></svg>${group}</div></td></tr>
  <tr><td><div class="node"><svg width="90" height="39">
    <path d="M${last ? '' : '12.500 0V39M'}45.500 0V18.500H62" ${dots}/>
    <svg x="69" y="9" width="19" height="19"><use href="#i-person"/></svg></svg>${person}</div></td><td>${role}</td></tr>`;
}).join('');
```
